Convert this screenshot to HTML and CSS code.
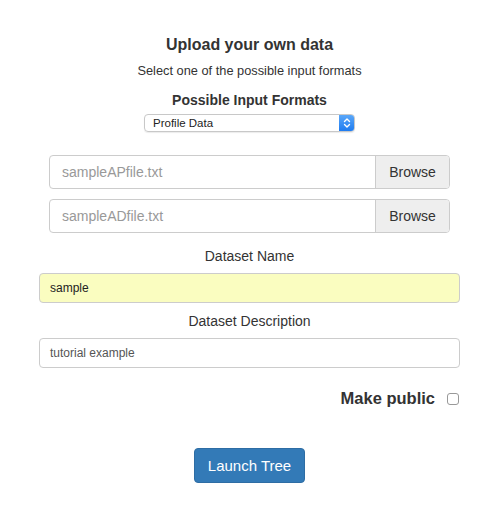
FILE: index.html
```html
<!DOCTYPE html>
<html>
<head>
<meta charset="utf-8">
<link rel="stylesheet" href="styles.css">
</head>
<body>
<div class="page">
  <h2 class="title">Upload your own data</h2>
  <p class="subtitle">Select one of the possible input formats</p>
  <h3 class="formats-label">Possible Input Formats</h3>
  <div class="select">
    <span class="select-text">Profile Data</span>
    <span class="select-arrow">
      <svg width="8" height="12" viewBox="0 0 8 12"><path d="M1.5 4.5 L4 2 L6.5 4.5 M1.5 7.5 L4 10 L6.5 7.5" fill="none" stroke="#fff" stroke-width="1.4" stroke-linecap="round" stroke-linejoin="round"/></svg>
    </span>
  </div>
  <div class="file-group">
    <div class="file-name">sampleAPfile.txt</div>
    <div class="file-btn">Browse</div>
  </div>
  <div class="file-group second">
    <div class="file-name">sampleADfile.txt</div>
    <div class="file-btn">Browse</div>
  </div>
  <div class="field">
    <label class="field-label">Dataset Name</label>
    <div class="text-input autofill">sample</div>
  </div>
  <div class="field second">
    <label class="field-label">Dataset Description</label>
    <div class="text-input">tutorial example</div>
  </div>
  <div class="public-row">
    <span class="public-label">Make public</span>
    <span class="checkbox"></span>
  </div>
  <div class="launch-row">
    <button class="launch">Launch Tree</button>
  </div>
</div>
</body>
</html>
```
FILE: styles.css
```css
* { box-sizing: border-box; }
body {
  margin: 0;
  background: #fff;
  font-family: "Liberation Sans", Arial, sans-serif;
  color: #333;
}
.page {
  width: 421px;
  margin: 0 0 0 39px;
  padding-top: 36px;
  display: flex;
  flex-direction: column;
  align-items: center;
}
.title {
  margin: 0;
  font-size: 16px;
  font-weight: bold;
  line-height: 18px;
}
.subtitle {
  margin: 9px 0 0;
  font-size: 12.8px;
  line-height: 15px;
}
.formats-label {
  margin: 14px 0 0;
  font-size: 14px;
  font-weight: bold;
  line-height: 16px;
}
.select {
  margin-top: 6px;
  width: 211px;
  height: 18px;
  border: 1px solid #c8c8c8;
  border-radius: 4px;
  display: flex;
  align-items: center;
  overflow: hidden;
  box-shadow: 0 1px 1px rgba(0,0,0,0.08);
}
.select-text {
  flex: 1;
  padding-left: 8px;
  font-size: 11.5px;
  color: #222;
}
.select-arrow {
  width: 15px;
  height: 100%;
  background: linear-gradient(#5aa7f8, #1f7cf0);
  display: flex;
  align-items: center;
  justify-content: center;
}
.file-group {
  margin-top: 23px;
  width: 401px;
  height: 34px;
  display: flex;
  border: 1px solid #ccc;
  border-radius: 4px;
  overflow: hidden;
}
.file-group.second { margin-top: 10px; }
.file-name {
  flex: 1;
  padding-left: 12px;
  display: flex;
  align-items: center;
  font-size: 14px;
  color: #999;
}
.file-btn {
  width: 74px;
  border-left: 1px solid #ccc;
  background: #eee;
  display: flex;
  align-items: center;
  justify-content: center;
  font-size: 14px;
  color: #333;
}
.field {
  align-self: stretch;
  display: flex;
  flex-direction: column;
  align-items: center;
}
.field-label {
  margin-top: 15px;
  font-size: 14px;
  line-height: 17px;
}
.field.second .field-label { margin-top: 10px; }
.text-input {
  margin-top: 8px;
  align-self: stretch;
  height: 30px;
  border: 1px solid #ccc;
  border-radius: 4px;
  padding-left: 10px;
  display: flex;
  align-items: center;
  font-size: 12px;
  color: #555;
}
.text-input.autofill {
  background: #fafdc0;
  color: #222;
}
.public-row {
  align-self: stretch;
  margin-top: 20px;
  display: flex;
  justify-content: flex-end;
  align-items: center;
  gap: 12px;
  padding-right: 1px;
}
.public-label {
  font-size: 16.5px;
  font-weight: bold;
  line-height: 20px;
}
.checkbox {
  width: 12px;
  height: 12px;
  border: 1px solid #999;
  border-radius: 3px;
  background: #fff;
  margin-top: 2px;
}
.launch-row {
  margin-top: 40px;
}
.launch {
  width: 111px;
  height: 35px;
  border: 1px solid #2e6da4;
  border-radius: 4px;
  background: #337ab7;
  color: #fff;
  font-family: "Liberation Sans", Arial, sans-serif;
  font-size: 15px;
  padding: 0;
}
```
